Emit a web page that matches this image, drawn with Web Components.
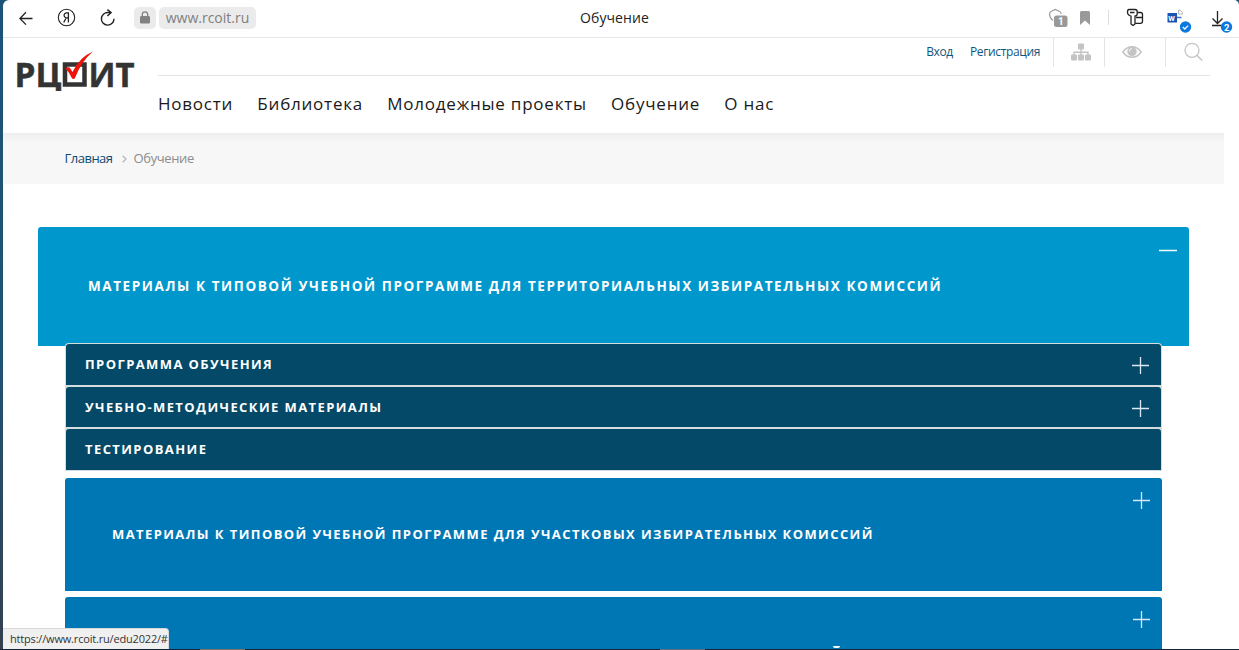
<!DOCTYPE html>
<html lang="ru">
<head>
<meta charset="utf-8">
<title>Обучение</title>
<style>
  body {
    margin: 0;
    width: 1239px;
    height: 650px;
    overflow: hidden;
    /* desktop behind the window: two taskbar glints, its edge, the wallpaper */
    background:
      linear-gradient(#7d7068, #7d7068) 200px 649px / 45px 1px no-repeat,
      linear-gradient(#5f6f80, #5f6f80) 660px 649px / 45px 1px no-repeat,
      linear-gradient(#12243a, #12243a) 0 649px / 100% 1px no-repeat,
      linear-gradient(#1c5478, #215273 55%, #34404f);
    font-family: "Open Sans", "Noto Sans", sans-serif;
  }
</style>
</head>
<body>
<browser-window>
  <browser-bar slot="bar" address="www.rcoit.ru" label="Обучение"></browser-bar>
  <site-header>
    <a slot="user">Вход</a>
    <a slot="user">Регистрация</a>
    <a slot="nav">Новости</a>
    <a slot="nav">Библиотека</a>
    <a slot="nav">Молодежные проекты</a>
    <a slot="nav">Обучение</a>
    <a slot="nav">О нас</a>
  </site-header>
  <bread-crumbs>
    <a>Главная</a>
    <span slot="current">Обучение</span>
  </bread-crumbs>
  <accordion-list>
    <accordion-panel class="open" sign="minus">Материалы к типовой учебной программе для территориальных избирательных комиссий</accordion-panel>
    <sub-list slot="sub">
      <sub-item sign="plus">Программа обучения</sub-item>
      <sub-item class="mid" sign="plus">Учебно-методические материалы</sub-item>
      <sub-item>Тестирование</sub-item>
    </sub-list>
    <accordion-panel slot="rest" sign="plus">Материалы к типовой учебной программе для участковых избирательных комиссий</accordion-panel>
    <accordion-panel slot="rest" class="cut" sign="plus"></accordion-panel>
  </accordion-list>
  <status-tip slot="status">https://www.rcoit.ru/edu2022/#</status-tip>
</browser-window>

<script>
  const signs = {
    plus: `<svg width="17" height="17" viewBox="0 0 17 17"><path d="M0 8.5h17M8.5 0v17" stroke="#d9e8f2" stroke-width="1.3"/></svg>`,
    minus: `<svg width="18" height="17" viewBox="0 0 18 17"><path d="M0 9.5h18" stroke="#f2fafd" stroke-width="1.5"/></svg>`
  };

  class BrowserWindow extends HTMLElement {
    constructor() {
      super();
      this.attachShadow({mode: "open"}).innerHTML = `
        <style>
          :host {
            display: flex;
            flex-direction: column;
            position: relative;
            width: 1236px;
            height: 649px;
            margin-left: 3px;
            background: #fff;
            border-radius: 6px 5px 0 0;
            overflow: hidden;
          }
        </style>
        <slot name="bar"></slot>
        <slot></slot>
        <slot name="status"></slot>
      `;
    }
  }

  class BrowserBar extends HTMLElement {
    constructor() {
      super();
      this.attachShadow({mode: "open"}).innerHTML = `
        <style>
          :host {
            display: grid;
            grid-template-columns: 1fr auto 1fr;
            align-items: center;
            flex: none;
            height: 37px;
            border-bottom: 1px solid #e6e6e6;
            font-size: 14px;
            color: #222;
          }
          svg { display: block; }
          .left { display: flex; align-items: center; padding: 0 0 2px 16px; }
          .ya { margin-left: 24px; }
          .reload { margin-left: 24px; }
          .lock, .address {
            background: #ebebeb;
            border-radius: 5px;
            height: 22px;
            display: flex;
            align-items: center;
            justify-content: center;
          }
          .lock { width: 22px; margin-left: 19px; }
          .address {
            width: 97px;
            margin-left: 3px;
            color: #7f7f7f;
            font-size: 14px;
            letter-spacing: 0;
          }
          .label { margin-right: 13px; padding-bottom: 2px; letter-spacing: 0.1px; }
          .right { display: flex; align-items: center; justify-content: flex-end; padding: 0 6px 1px 0; }
        </style>
        <div class="left">
          <svg width="14" height="14" viewBox="0 0 14 14" fill="none" stroke="#222" stroke-width="1.3"><path d="M13.5 7.5H1M7 1.2L.9 7.5 7 13.6"/></svg>
          <svg class="ya" width="19" height="19" viewBox="0 0 19 19" fill="none" stroke="#222">
            <circle cx="9.5" cy="9.5" r="8.2" stroke-width="1.1"/>
            <path d="M11.4 14.5V4.8H9.8a2.5 2.5 0 0 0-.4 5h2M9.2 9.8l-2.5 4.7" stroke-width="1.3"/>
          </svg>
          <svg class="reload" width="15" height="17" viewBox="0 0 15 17" fill="none" stroke="#222" stroke-width="1.4"><path d="M14 9.8A6.3 6.3 0 1 1 8.5 3.6h2.7M7.4 .6l3.7 3-3.7 3.4"/></svg>
          <span class="lock">
            <svg width="10" height="13" viewBox="0 0 10 13"><path d="M2.3 6V3.6a2.7 2.7 0 0 1 5.4 0V6" fill="none" stroke="#828282" stroke-width="1.3"/><rect y="5" width="10" height="7.6" rx="1.4" fill="#828282"/></svg>
          </span>
          <span class="address">${this.getAttribute("address")}</span>
        </div>
        <span class="label">${this.getAttribute("label")}</span>
        <div class="right">
          <svg width="186" height="36" viewBox="1047 0 186 36" font-family="Roboto, sans-serif" font-weight="700" fill="none">
            <path d="M1053 20.5c-2-1.6-3.5-4-3.5-6.5 0-1.4.8-2.2 2-2.7l3.8-1.9 3.9 1.9c1.3.5 1.9 1.4 1.9 2.7" stroke="#999" stroke-width="1.1"/>
            <rect x="1054" y="15.5" width="13.5" height="11.5" rx="2.5" fill="#999"/>
            <text x="1058" y="25" font-size="10" fill="#fff">1</text>
            <path d="M1080 12.5q0-1.5 1.5-1.5h7q1.5 0 1.5 1.5V25l-5-4.5-5 4.5z" fill="#999"/>
            <path d="M1108.5 10v15" stroke="#ddd"/>
            <g stroke="#222" stroke-width="1.3" stroke-linejoin="round">
              <path d="M1129 9.5h6q2.2 0 2.2 2.2v2.1q0 2.2-2.2 2.2v8l-2 1.5-2-1.5V16q-3.5-1-3.5-3.8 0-2.7 1.5-2.7zM1130 12.5h4.5"/>
              <path d="M1137.5 12.5h3q2 0 2 2v6.8q0 2-2 2h-5.3M1136 17.5h6.5"/>
            </g>
            <path d="M1178.5 10h1.5l2.5 2.7v1.3h-4z" stroke="#b5b5b5"/>
            <path d="M1177 17.5h4.5" stroke="#3977cf" stroke-width="1.5"/>
            <rect x="1167.5" y="13" width="9.5" height="9.5" fill="#1b54b0"/>
            <text x="1168.3" y="20.7" font-size="7.5" fill="#fff">W</text>
            <circle cx="1185.5" cy="27" r="5.7" fill="#0a78dc"/>
            <path d="M1182.8 27l2 2 3.3-3.4" stroke="#fff" stroke-width="1.3"/>
            <path d="M1217.5 11v12M1212.5 18.5l5 5 5-5M1212 25.5h9" stroke="#222" stroke-width="1.3"/>
            <circle cx="1226.5" cy="27" r="5.7" fill="#0a78dc"/>
            <text x="1223.9" y="30.5" font-size="9.5" fill="#fff">2</text>
          </svg>
        </div>
      `;
    }
  }

  class SiteLogo extends HTMLElement {
    constructor() {
      super();
      this.attachShadow({mode: "open"}).innerHTML = `
        <style>
          :host { display: block; width: 120px; height: 50px; }
          svg { display: block; overflow: visible; }
        </style>
        <svg width="120" height="50" viewBox="16 50 120 50" font-family="Open Sans, sans-serif" font-weight="700" font-size="34" fill="#333">
          <g stroke="#333" stroke-width=".5">
            <text x="14.5" y="86.500" textLength="47" lengthAdjust="spacingAndGlyphs">РЦ</text>
            <text x="88.5" y="86.500" textLength="46" lengthAdjust="spacingAndGlyphs">ИТ</text>
          </g>
          <!-- shortens the tail of Ц -->
          <path d="M54 91h10v5H54z" fill="#fff"/>
          <rect x="65" y="64.5" width="19.5" height="20" fill="none" stroke="#333" stroke-width="4.5"/>
          <path d="M65.5 68.5q2-2 4-1 1.5 1.5 3 4.5 7-15 20.5-20.5-11.5 9.5-18 26.5-1 1.5-3 .5-2.5-6-6.5-10z" fill="#ee1309"/>
        </svg>
      `;
    }
  }

  class SiteHeader extends HTMLElement {
    constructor() {
      super();
      this.attachShadow({mode: "open"}).innerHTML = `
        <style>
          :host {
            display: flex;
            flex: none;
            height: 95px;
            width: 1221px;
            background: #fff;
          }
          site-logo { margin: 12px 0 0 13px; flex: none; }
          .main { width: 1052px; margin-left: 22px; }
          .top {
            display: flex;
            justify-content: flex-end;
            height: 37px;
            border-bottom: 1px solid #e4e4e4;
            font-size: 12px;
            line-height: 27px;
            color: #10557c;
          }
          .user { display: flex; gap: 17px; padding-right: 13px; letter-spacing: -0.35px; }
          .icon {
            display: flex;
            justify-content: center;
            box-sizing: border-box;
            height: 29px;
            padding-top: 4px;
            border-left: 1px solid #e4e4e4;
          }
          .map { width: 51px; padding-left: 4px; }
          .eye { width: 61px; padding-right: 6px; }
          .find { width: 45px; padding-left: 11px; }
          nav {
            display: flex;
            gap: 24.2px;
            padding-top: 15px;
            font-size: 17px;
            line-height: 26px;
            letter-spacing: 0.78px;
            color: #1a1a1a;
            white-space: nowrap;
          }
        </style>
        <site-logo></site-logo>
        <div class="main">
          <div class="top">
            <div class="user"><slot name="user"></slot></div>
            <div class="icon map">
              <svg width="20" height="20" viewBox="0 0 20 20" fill="#c4c4c4"><rect x="7" y="1.5" width="6" height="6" rx="1"/><rect x="0" y="12.5" width="6" height="6" rx="1"/><rect x="7" y="12.5" width="6" height="6" rx="1"/><rect x="14" y="12.5" width="6" height="6" rx="1"/><path d="M10 7v6M3 13v-2.8h14V13" fill="none" stroke="#c4c4c4" stroke-width="1.4"/></svg>
            </div>
            <div class="icon eye">
              <svg width="20" height="20" viewBox="0 0 20 20"><path d="M.8 10Q4.5 4.8 10 4.800T19.2 10Q15.5 15.200 10 15.200T.8 10z" fill="none" stroke="#c4c4c4" stroke-width="1.5"/><circle cx="10" cy="9.5" r="4.7" fill="#c4c4c4"/><path d="M7.3 9.3A2.7 2.7 0 0 1 10 6.6" fill="none" stroke="#fff" stroke-width=".9"/></svg>
            </div>
            <div class="icon find">
              <svg width="19" height="20" viewBox="0 0 19 20" fill="none" stroke="#c4c4c4" stroke-width="1.3"><circle cx="8" cy="8.3" r="7"/><path d="M12.9 13.3l5.3 5.2" stroke-width="1.5"/></svg>
            </div>
          </div>
          <nav><slot name="nav"></slot></nav>
        </div>
      `;
    }
  }

  class BreadCrumbs extends HTMLElement {
    constructor() {
      super();
      this.attachShadow({mode: "open"}).innerHTML = `
        <style>
          :host {
            display: flex;
            align-items: center;
            flex: none;
            box-sizing: border-box;
            width: 1221px;
            height: 51px;
            padding: 0 0 2px 61.5px;
            background: linear-gradient(#eee, #f7f7f7 9px);
            font-size: 13px;
            letter-spacing: -0.5px;
            color: #0e4a72;
          }
          svg { margin: 3px 7px 0 9px; }
          .current { color: #8c8c8c; letter-spacing: -0.38px; }
        </style>
        <slot></slot>
        <svg width="5" height="8" viewBox="0 0 5 8" fill="none" stroke="#b5b5b5" stroke-width="1.200"><path d="M.7.8L4 4 .7 7.2"/></svg>
        <span class="current"><slot name="current"></slot></span>
      `;
    }
  }

  class AccordionList extends HTMLElement {
    constructor() {
      super();
      this.attachShadow({mode: "open"}).innerHTML = `
        <style>
          :host { display: block; flex: 1; min-height: 0; overflow: hidden; padding: 43px 49px 0 35px; }
          .inner { width: 1097px; margin: -3px 0 0 27px; }
          .rest { display: flex; flex-direction: column; gap: 6px; margin-top: 7px; }
        </style>
        <slot></slot>
        <div class="inner">
          <slot name="sub"></slot>
          <div class="rest"><slot name="rest"></slot></div>
        </div>
      `;
    }
  }

  class AccordionPanel extends HTMLElement {
    constructor() {
      super();
      this.attachShadow({mode: "open"}).innerHTML = `
        <style>
          :host {
            display: flex;
            justify-content: space-between;
            box-sizing: border-box;
            height: 113px;
            padding: 0 12px 0 47px;
            border-radius: 3px 3px 0 0;
            background: #0077b5;
            color: #fff;
            font-size: 13px;
            font-weight: 700;
            line-height: 112px;
            letter-spacing: 1.41px;
            text-transform: uppercase;
            white-space: nowrap;
          }
          :host(.open) {
            height: 119px;
            width: 1151px;
            padding-left: 50px;
            background: #0098cc;
            font-size: 13.5px;
            line-height: 118px;
            letter-spacing: 1.58px;
          }
          svg { margin-top: 14px; }
          /* the breve of the heading is all that clears the fold */
          .fold { width: 7px; height: 2px; margin: 49px 0 0 721px; background: #fff; border-radius: 0 0 3px 3px; }
          :host(:not(.cut)) .fold { display: none; }
          :host(.cut) .text { display: none; }
        </style>
        <span class="text"><slot></slot></span>
        <i class="fold"></i>
        ${signs[this.getAttribute("sign")]}
      `;
    }
  }

  class SubList extends HTMLElement {
    constructor() {
      super();
      this.attachShadow({mode: "open"}).innerHTML = `
        <style>
          :host {
            display: flex;
            flex-direction: column;
            gap: 2px;
            padding: 1px;
            border-radius: 4px 4px 0 0;
            background: #d5dbde;
          }
        </style>
        <slot></slot>
      `;
    }
  }

  class SubItem extends HTMLElement {
    constructor() {
      super();
      this.attachShadow({mode: "open"}).innerHTML = `
        <style>
          :host {
            display: flex;
            align-items: center;
            justify-content: space-between;
            box-sizing: border-box;
            height: 41px;
            padding: 0 12px 0 19px;
            border-radius: 3px 3px 0 0;
            background: #044967;
            color: #fff;
            font-size: 13px;
            font-weight: 700;
            letter-spacing: 1.41px;
            text-transform: uppercase;
          }
          :host(.mid) { height: 40px; }
          span { padding-bottom: 2px; }
          :host(.mid) span { padding-bottom: 1px; }
          svg { margin-top: 2px; }
        </style>
        <span><slot></slot></span>
        ${signs[this.getAttribute("sign")] || ""}
      `;
    }
  }

  class StatusTip extends HTMLElement {
    constructor() {
      super();
      this.attachShadow({mode: "open"}).innerHTML = `
        <style>
          :host {
            position: absolute;
            left: 0;
            bottom: 0;
            box-sizing: border-box;
            width: 166px;
            height: 21px;
            padding-left: 7px;
            border-top: 1px solid #d8d8d8;
            border-right: 1px solid #d8d8d8;
            border-radius: 0 4px 0 0;
            background: #f0f0f0;
            color: #333;
            font-size: 11px;
            line-height: 19px;
            letter-spacing: -0.18px;
            white-space: nowrap;
          }
        </style>
        <slot></slot>
      `;
    }
  }

  customElements.define("browser-window", BrowserWindow);
  customElements.define("browser-bar", BrowserBar);
  customElements.define("site-logo", SiteLogo);
  customElements.define("site-header", SiteHeader);
  customElements.define("bread-crumbs", BreadCrumbs);
  customElements.define("accordion-list", AccordionList);
  customElements.define("accordion-panel", AccordionPanel);
  customElements.define("sub-list", SubList);
  customElements.define("sub-item", SubItem);
  customElements.define("status-tip", StatusTip);
</script>
</body>
</html>
